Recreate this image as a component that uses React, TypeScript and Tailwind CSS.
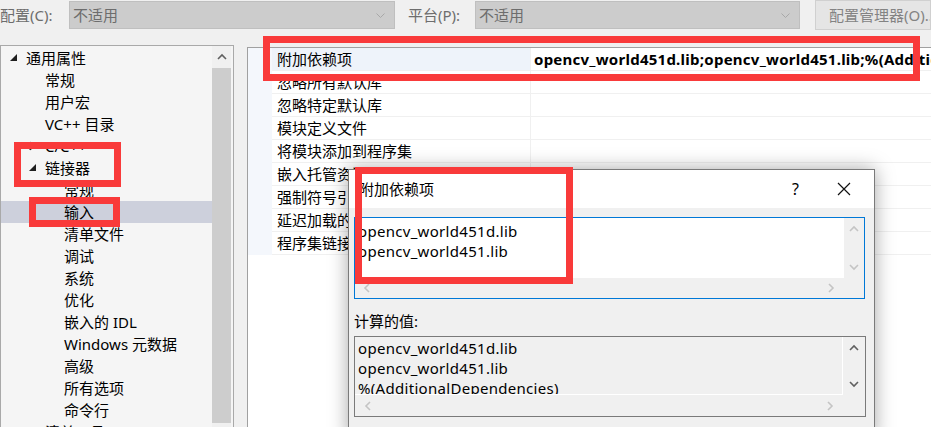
import React from "react";

type TreeItem = {
  label: string;
  level: 0 | 1 | 2;
  toggle?: "open" | "closed";
  selected?: boolean;
};

const treeItems: TreeItem[] = [
  { label: "通用属性", level: 0, toggle: "open" },
  { label: "常规", level: 1 },
  { label: "用户宏", level: 1 },
  { label: "VC++ 目录", level: 1 },
  { label: "C/C++", level: 1, toggle: "closed" },
  { label: "链接器", level: 1, toggle: "open" },
  { label: "常规", level: 2 },
  { label: "输入", level: 2, selected: true },
  { label: "清单文件", level: 2 },
  { label: "调试", level: 2 },
  { label: "系统", level: 2 },
  { label: "优化", level: 2 },
  { label: "嵌入的 IDL", level: 2 },
  { label: "Windows 元数据", level: 2 },
  { label: "高级", level: 2 },
  { label: "所有选项", level: 2 },
  { label: "命令行", level: 2 },
  { label: "清单工具", level: 1, toggle: "closed" },
];

const gridRows = [
  "附加依赖项",
  "忽略所有默认库",
  "忽略特定默认库",
  "模块定义文件",
  "将模块添加到程序集",
  "嵌入托管资源文件",
  "强制符号引用",
  "延迟加载的 DLL",
  "程序集链接资源",
];

const Chevron = ({ dir, color }: { dir: "up" | "down" | "left" | "right"; color: string }) => {
  const d = {
    up: "M1 6 L5 2 L9 6",
    down: "M1 2 L5 6 L9 2",
    left: "M6 1 L2 5 L6 9",
    right: "M2 1 L6 5 L2 9",
  }[dir];
  const vertical = dir === "up" || dir === "down";
  return (
    <svg width={vertical ? 10 : 8} height={vertical ? 8 : 10} viewBox={vertical ? "0 0 10 8" : "0 0 8 10"}>
      <path d={d} fill="none" stroke={color} strokeWidth="1.6" />
    </svg>
  );
};

const Combo = ({ width }: { width: string }) => (
  <div className={`flex h-[28px] ${width} shrink-0 items-center justify-between border border-[#bfbfbf] bg-[#cccccc] pl-[3px] pr-[9px] text-[#6d6d6d]`}>
    <span>不适用</span>
    <svg width="9" height="5" viewBox="0 0 9 5">
      <path d="M0.5 0.5 L4.5 4.5 L8.5 0.5" fill="none" stroke="#a8a8a8" strokeWidth="1" />
    </svg>
  </div>
);

const Red = ({ className }: { className: string }) => (
  <div className={`absolute border-[7px] border-[#f93a3a] ${className}`} />
);

export default function App() {
  return (
    <div className="relative h-[427px] w-[931px] overflow-hidden bg-[#f0f0f0] font-['Noto_Sans','Noto_Sans_CJK_SC',sans-serif] text-[15px] text-black">
      {/* top bar */}
      <div className="flex h-[30px] items-start pt-px">
        <span className="w-[69px] shrink-0 leading-[28px] text-[#6d6d6d]">配置(C):</span>
        <Combo width="w-[326px]" />
        <span className="ml-[13px] w-[67px] shrink-0 leading-[28px] text-[#6d6d6d]">平台(P):</span>
        <Combo width="w-[325px]" />
        <div className="-mt-px ml-[15px] flex h-[30px] min-w-0 flex-1 items-center overflow-hidden border border-[#d0d0d0] bg-[#e5e5e5] pl-[13px] text-[#838383] whitespace-nowrap">
          配置管理器(O)...
        </div>
      </div>

      <div className="mt-[15px] flex h-[382px]">
        {/* tree */}
        <div className="flex h-[390px] w-[234px] shrink-0 border border-[#a9a9a9] bg-[#f5f5f5]">
          <div className="min-w-0 flex-1 pt-px">
            {treeItems.map((t, i) => (
              <div
                key={i}
                className={`flex h-[22px] items-center ${t.selected ? "bg-[#cdd0dc]" : ""}`}
              >
                <div
                  className={`flex items-center ${
                    t.level === 0 ? "pl-[9px]" : t.level === 1 ? "pl-[28px]" : "pl-[63px]"
                  }`}
                >
                  {t.toggle === "open" && (
                    <svg width="8" height="8" viewBox="0 0 8 8" className="mr-[8px]">
                      <polygon points="7,0 7,7 0,7" fill="#1e1e1e" />
                    </svg>
                  )}
                  {t.toggle === "closed" && (
                    <svg width="8" height="10" viewBox="0 0 8 10" className="mr-[8px]">
                      <polygon points="1,1 6,5 1,9" fill="none" stroke="#1e1e1e" strokeWidth="1" />
                    </svg>
                  )}
                  {!t.toggle && t.level === 1 && <span className="w-[16px]" />}
                  <span className="whitespace-nowrap leading-[22px]">{t.label}</span>
                </div>
              </div>
            ))}
          </div>
          <div className="mr-[2px] flex w-[19px] shrink-0 flex-col bg-[#f0f0f0]">
            <div className="flex h-[22px] items-center justify-center">
              <Chevron dir="up" color="#606060" />
            </div>
            <div className="h-[355px] bg-[#cdcdcd]" />
          </div>
        </div>

        {/* property grid */}
        <div className="ml-[13px] mt-[2px] flex h-[400px] min-w-0 flex-1 border-l border-t border-[#a0a0a0] bg-white">
          <div className="h-[207px] w-[24px] shrink-0 bg-[#f4f7fc]" />
          <div className="min-w-0 flex-1">
            {gridRows.map((name, i) => (
              <div key={i} className="flex h-[23px] border-b border-[#f0f0f0]">
                <div
                  className={`flex w-[259px] shrink-0 items-center border-r border-[#f0f0f0] pl-[5px] whitespace-nowrap ${
                    i === 0 ? "bg-[#eef3fa]" : ""
                  }`}
                >
                  {name}
                </div>
                <div className="flex min-w-0 flex-1 items-center overflow-hidden pl-[3px] whitespace-nowrap font-bold tracking-[0.25px]">
                  {i === 0 ? "opencv_world451d.lib;opencv_world451.lib;%(AdditionalDependencies)" : ""}
                </div>
              </div>
            ))}
          </div>
        </div>
      </div>

      {/* dialog */}
      <div className="absolute left-[348px] top-[169px] flex h-[270px] w-[527px] flex-col border border-[#7a7a7a] bg-[#f0f0f0] shadow-[0_0_18px_rgba(0,0,0,0.35)]">
        <div className="flex h-[38px] items-center bg-white">
          <span className="ml-[10px] flex-1">附加依赖项</span>
          <span className="mr-[38px] text-[16px]">?</span>
          <svg width="14" height="14" viewBox="0 0 14 14" className="mr-[23px]">
            <path d="M1 1 L13 13 M13 1 L1 13" stroke="#111" strokeWidth="1.2" />
          </svg>
        </div>
        <div className="flex flex-col px-[5px] pt-[9px]">
          <div className="flex h-[82px] w-[511px] flex-col border border-[#0078d7]">
            <div className="flex h-[60px]">
              <div className="flex-1 bg-white pl-[3px] pt-[3px] leading-[20px] tracking-[0.3px]">
                <div>opencv_world451d.lib</div>
                <div>opencv_world451.lib</div>
              </div>
              <div className="flex w-[20px] flex-col items-center justify-between py-[7px]">
                <Chevron dir="up" color="#c4c4c4" />
                <Chevron dir="down" color="#c4c4c4" />
              </div>
            </div>
            <div className="flex h-[20px] items-center justify-between pl-[8px] pr-[29px]">
              <Chevron dir="left" color="#c4c4c4" />
              <Chevron dir="right" color="#c4c4c4" />
            </div>
          </div>
          <div className="mt-[12px] h-[20px] leading-[20px]">计算的值:</div>
          <div className="mt-[5px] flex h-[81px] w-[512px] flex-col border border-[#7a7a7a]">
            <div className="flex h-[58px]">
              <div className="flex-1 overflow-hidden border-b border-r border-white pl-[3px] pt-px leading-[20px] tracking-[0.3px]">
                <div>opencv_world451d.lib</div>
                <div>opencv_world451.lib</div>
                <div>%(AdditionalDependencies)</div>
              </div>
              <div className="flex w-[22px] flex-col items-center justify-between pb-[7px] pt-[7px]">
                <Chevron dir="up" color="#606060" />
                <Chevron dir="down" color="#606060" />
              </div>
            </div>
            <div className="flex h-[21px] items-center justify-between pl-[9px] pr-[31px]">
              <Chevron dir="left" color="#c4c4c4" />
              <Chevron dir="right" color="#c4c4c4" />
            </div>
          </div>
        </div>
      </div>

      {/* annotations */}
      <Red className="left-[263px] top-[36px] h-[45px] w-[657px]" />
      <Red className="left-[14px] top-[142px] h-[45px] w-[107px]" />
      <Red className="left-[29px] top-[197px] h-[30px] w-[91px]" />
      <Red className="left-[355px] top-[167px] h-[117px] w-[218px]" />
    </div>
  );
}
